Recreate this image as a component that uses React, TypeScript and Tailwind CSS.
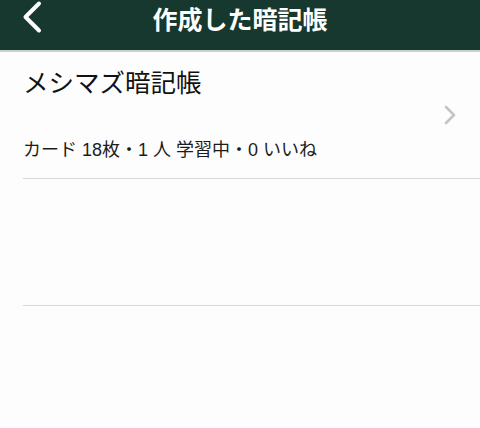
const font = {
  fontFamily: '"Noto Sans CJK JP", "Noto Sans", sans-serif',
};

const mixed = {
  fontFamily: '"Liberation Sans", "Noto Sans CJK JP", sans-serif',
};

function BackIcon() {
  return (
    <svg width="24" height="34" viewBox="0 0 24 34" fill="none">
      <polyline
        points="19,3.5 5.5,17 19,30.5"
        stroke="white"
        strokeWidth="4"
        strokeLinecap="round"
        strokeLinejoin="round"
      />
    </svg>
  );
}

function ChevronRight() {
  return (
    <svg width="12" height="20" viewBox="0 0 12 20" fill="none">
      <polyline
        points="2,2 10,10 2,18"
        stroke="#c4c4c8"
        strokeWidth="2.6"
        strokeLinecap="round"
        strokeLinejoin="round"
      />
    </svg>
  );
}

export default function App() {
  return (
    <div className="h-[428px] w-[480px] overflow-hidden bg-[#fdfdfd]" style={font}>
      <header className="relative flex h-[52px] items-start justify-center border-b-2 border-[#c8d1ce] bg-[#16382e]">
        <button className="absolute left-[20px] top-0 h-[34px]" aria-label="戻る">
          <BackIcon />
        </button>
        <h1 className="mt-[1px] text-[25px] leading-[34px] font-bold text-white">作成した暗記帳</h1>
      </header>

      <div className="ml-[23px]">
        <div className="flex h-[127px] items-center border-b border-[#d8d8d8] pr-[24px]">
          <div className="flex-1 self-start pt-[13px]">
            <div className="text-[25.5px] leading-[32px] text-[#111]">メシマズ暗記帳</div>
            <div className="mt-[41px] text-[18px] leading-[24px] text-[#1c1c1c]" style={mixed}>
              カード 18枚・1 人 学習中・0 いいね
            </div>
          </div>
          <ChevronRight />
        </div>
        <div className="h-[127px] border-b border-[#d8d8d8]" />
      </div>
    </div>
  );
}
